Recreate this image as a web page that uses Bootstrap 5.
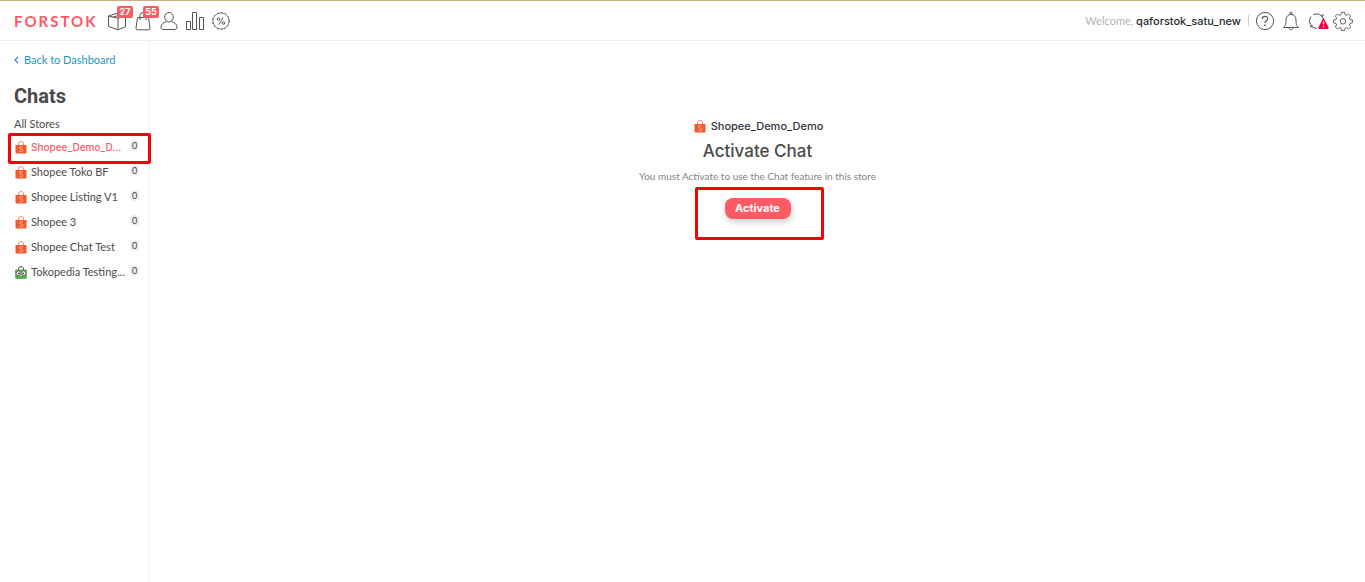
<!DOCTYPE html>
<html lang="en">
<head>
<meta charset="utf-8">
<meta name="viewport" content="width=device-width, initial-scale=1">
<title>Forstok – Chats</title>
<link href="https://cdn.jsdelivr.net/npm/bootstrap@5.3.0/dist/css/bootstrap.min.css" rel="stylesheet">
<style>
  body { font-family: Lato, "Liberation Sans", sans-serif; font-size: 11px; line-height: 16px; color: #4a4a4a; border-top: 1px solid #cfae87; }
  a { text-decoration: none; }
  .topbar { height: 40px; border-bottom: 1px solid #ededed; padding: 0 12px 0 14px; }
  .brand { font: 700 15px/20px Lato, sans-serif; letter-spacing: 2px; color: #fb5b63; width: 93px; padding-top: 1px; }
  .tools { gap: 6px; }
  .tool { color: #555; line-height: 0; width: 20px; }
  .tool svg, .store svg, .shop svg { display: block; flex: none; }
  .count { position: absolute; left: 10px; top: -5px; width: 16px; border-radius: 2px; background: #fc5b63; color: #fff; font-size: 9px; line-height: 12px; font-weight: 700; text-align: center; font-family: Inter, sans-serif; }
  .welcome { color: #b3b3b3; }
  .user { color: #262b33; font-weight: 500; font-family: Inter, sans-serif; }
  .divider { width: 1px; height: 11px; background: #ccc; margin: 0 6px 0 7px; }
  .side { width: 150px; min-height: calc(100vh - 41px); border-right: 1px solid #f3f3f3; padding: 11px 8px 0; }
  .back { color: #2196c8; padding-left: 6px; gap: 5px; }
  .side h1 { font: 700 20px/28px Roboto, sans-serif; margin: 14px 6px 6px; }
  .all-stores { color: #4a4a4a; padding: 0 6px; height: 19px; }
  .store { color: #4a4a4a; height: 25px; padding: 0 2px 1px 7px; gap: 4px; position: relative; }
  .store.active { color: #fc5b63; font: 500 10px/16px Inter, sans-serif; }
  .num { background: #efefef; border-radius: 4px; color: #444; font: 400 9px/11px Lato, sans-serif; width: 9px; text-align: center; margin: 0 0 3px auto; }
  .outline { position: absolute; border: 3px solid #f90008; border-radius: 2px; pointer-events: none; }
  .outline-store { inset: -2px -10px -4px 0; z-index: 1; }
  .outline-button { inset: -11px -33px -21px -30px; }
  .main { padding-top: 77px; }
  .shop { color: #30343b; font-weight: 500; font-family: Inter, sans-serif; gap: 5px; padding-left: 2px; }
  .main h2 { font: 500 17px/22px Inter, sans-serif; margin: 6px 0; }
  .main p { color: #858585; font-size: 10px; margin: 0 0 14px; }
  .btn-activate { background: #fc5b65; color: #fff; font: 700 11px/21px Inter, sans-serif; width: 66px; padding: 0; border: 0; border-radius: 8px; box-shadow: 1px 3px 6px #0003; }
  .btn-activate:hover { background: #e94b56; color: #fff; }
</style>
</head>
<body>
<svg width="0" height="0" class="position-absolute" aria-hidden="true">
  <symbol id="shopee" viewBox="0 0 12 13">
    <path d="M3.500 4V3a2.500 2.500 0 0 1 5 0v1" fill="none" stroke="#f58a66"/>
    <path d="M.5 4h11v7.500a1 1 0 0 1-1 1h-9a1 1 0 0 1-1-1z" fill="#f4582c"/>
    <path d="M7.700 6.200C6.700 5.300 4.500 5.500 4.500 6.800s3.300 1.200 3.300 2.700-2.300 1.700-3.500.6" fill="none" stroke="#ffd0bb" stroke-width=".8"/>
  </symbol>
  <symbol id="tokopedia" viewBox="0 0 12 13">
    <path d="M3.500 4V3a2.500 2.500 0 0 1 5 0v1" fill="none" stroke="#4a5a4b"/>
    <path d="M.5 4h11v7.500q0 1-1 1h-9q-1 0-1-1z" fill="#4cb050" stroke="#37803a" stroke-width=".5"/>
    <circle cx="3.600" cy="7.300" r="2.300" fill="#fff" stroke="#333" stroke-width=".5"/><circle cx="8.400" cy="7.300" r="2.300" fill="#fff" stroke="#333" stroke-width=".5"/>
    <circle cx="4" cy="7.500" r=".9" fill="#222"/><circle cx="8" cy="7.500" r=".9" fill="#222"/><path d="m5 9.300 1-.8 1 .8-1 1.200z" fill="#eef0d0"/>
  </symbol>
</svg>

<header class="topbar d-flex align-items-center justify-content-between">
  <nav class="d-flex align-items-center" aria-label="Main">
    <a href="#" class="brand">FORSTOK</a>
    <div class="tools d-flex align-items-center">
      <a href="#" class="tool position-relative" aria-label="Products">
        <svg width="20" height="20" viewBox="0 0 20 20" fill="none" stroke="currentColor" stroke-linejoin="round"><path d="M1.500 5 11 7.200v11.600L1.500 15.500zM11 7.200 18.500 4.800v11L11 18.800M1.500 5 9 2.500l9.500 2.300M6 6.200l7.500-2.500"/></svg>
        <span class="count">27</span></a>
      <a href="#" class="tool position-relative" aria-label="Orders">
        <svg width="20" height="20" viewBox="0 0 20 20" fill="none" stroke="currentColor" stroke-linejoin="round"><path d="M4.500 6.500h11l1.500 10.500q.2 1.800-1.500 1.800h-11q-1.700 0-1.500-1.800zM7 9V4.500a3 3 0 0 1 6 0V9"/></svg>
        <span class="count">55</span></a>
      <a href="#" class="tool" aria-label="Customers">
        <svg width="20" height="20" viewBox="0 0 20 20" fill="none" stroke="currentColor"><path d="M10 1.500c-6 0-5.500 9.500 0 9.500s6-9.500 0-9.500zM7.500 10.500c-3.500 1.500-5.500 2.700-5.500 5.500 0 2 1 2.500 3 2.500h10c2 0 3-.5 3-2.500 0-2.800-2-4-5.500-5.500"/></svg></a>
      <a href="#" class="tool" aria-label="Reports">
        <svg width="20" height="20" viewBox="0 0 20 20" fill="none" stroke="currentColor"><path d="M1.500 10.500h4v8h-4zM7.500 1.500h4v17h-4zM14.500 6.500h4v12h-4z"/></svg></a>
      <a href="#" class="tool" aria-label="Promotions">
        <svg width="20" height="20" viewBox="0 0 20 20" fill="none" stroke="currentColor"><circle cx="10" cy="10" r="8" stroke-width=".7"/><circle cx="10" cy="10" r="8.600" stroke-width=".8" stroke-dasharray="1.800 2.200"/><circle cx="7.500" cy="8" r="1.300"/><circle cx="12.500" cy="12" r="1.300"/><path d="m12 6.500-4 7"/></svg></a>
    </div>
  </nav>
  <div class="d-flex align-items-center">
    <span class="welcome">Welcome, <a href="#" class="user">qaforstok_satu_new</a></span>
    <span class="divider"></span>
    <div class="tools d-flex align-items-center">
      <a href="#" class="tool" aria-label="Help"><svg width="20" height="20" viewBox="0 0 20 20" fill="none" stroke="currentColor"><circle cx="10" cy="10" r="8.600"/><path d="M7.300 8c0-3.600 5.500-3.500 5.500-.3 0 2-2.800 2.200-2.800 4.300" stroke-width="1.200"/><circle cx="10" cy="14.300" r=".5" fill="currentColor"/></svg></a>
      <a href="#" class="tool" aria-label="Notifications"><svg width="20" height="20" viewBox="0 0 20 20" fill="none" stroke="currentColor"><path d="M2.500 16.500c2-2 2.500-3 2.500-7.500 0-7.500 10-7.500 10 0 0 4.500.5 5.500 2.500 7.500zM8 16.500c0 3 4 3 4 0M9 3.300V2a1 1 0 0 1 2 0v1.300"/></svg></a>
      <a href="#" class="tool" aria-label="Sync problems"><svg width="22" height="20" viewBox="0 0 22 20" fill="none" stroke="currentColor"><path d="M10 17.300A7.300 7.300 0 0 1 4 5.500M6 3.800A7.300 7.300 0 0 1 16.500 8M3 15.700h2v-2M14 5h2V3"/><path d="m16.500 8.500 4.300 8.500h-8.600z" fill="#f5003d" stroke="#f5003d" stroke-width="1.800" stroke-linejoin="round"/><path d="M16.500 10.500v3M16.500 14.800v1.400" stroke="#fff" stroke-width="1.400"/></svg></a>
      <a href="#" class="tool" aria-label="Settings"><svg width="20" height="20" viewBox="0 0 20 20" fill="none" stroke="currentColor" stroke-width=".9" stroke-linejoin="round"><path d="M8.500 1.300h3l.5 2.400 1.600.7 2-1.400 2.100 2.100-1.400 2 .7 1.400 2.400.4v3l-2.400.5-.7 1.500 1.400 2-2.100 2.100-2-1.400-1.600.7-.5 2.200h-3L8 17.300l-1.600-.7-2 1.400-2.100-2.100 1.400-2-.7-1.500-2.400-.5v-3L3 8.500l.7-1.400-1.400-2L4.400 3l2 1.400L8 3.700z"/><circle cx="10" cy="10.300" r="2.800"/></svg></a>
    </div>
  </div>
</header>

<div class="d-flex">
  <aside class="side flex-shrink-0">
    <a href="#" class="back d-flex align-items-center"><svg width="5" height="8" viewBox="0 0 5 8" fill="none" stroke="#2a86e8" stroke-width="1.200"><path d="M4 1 1 4l3 3"/></svg>Back to Dashboard</a>
    <h1>Chats</h1>
    <a href="#" class="all-stores d-block">All Stores</a>
    <nav aria-label="Stores">
      <a href="#" class="store active d-flex align-items-center"><svg width="12" height="13"><use href="#shopee"/></svg><span class="text-nowrap">Shopee_Demo_D...</span><span class="num">0</span><span class="outline outline-store"></span></a>
      <a href="#" class="store d-flex align-items-center"><svg width="12" height="13"><use href="#shopee"/></svg><span class="text-nowrap">Shopee Toko BF</span><span class="num">0</span></a>
      <a href="#" class="store d-flex align-items-center"><svg width="12" height="13"><use href="#shopee"/></svg><span class="text-nowrap">Shopee Listing V1</span><span class="num">0</span></a>
      <a href="#" class="store d-flex align-items-center"><svg width="12" height="13"><use href="#shopee"/></svg><span class="text-nowrap">Shopee 3</span><span class="num">0</span></a>
      <a href="#" class="store d-flex align-items-center"><svg width="12" height="13"><use href="#shopee"/></svg><span class="text-nowrap">Shopee Chat Test</span><span class="num">0</span></a>
      <a href="#" class="store d-flex align-items-center"><svg width="12" height="13"><use href="#tokopedia"/></svg><span class="text-nowrap">Tokopedia Testing...</span><span class="num">0</span></a>
    </nav>
  </aside>
  <main class="main flex-fill text-center">
    <div class="shop d-flex align-items-center justify-content-center"><svg width="12" height="13"><use href="#shopee"/></svg>Shopee_Demo_Demo</div>
    <h2>Activate Chat</h2>
    <p>You must Activate to use the Chat feature in this store</p>
    <div class="d-inline-flex position-relative">
      <button type="button" class="btn btn-activate">Activate</button>
      <span class="outline outline-button"></span>
    </div>
  </main>
</div>
<script src="https://cdn.jsdelivr.net/npm/bootstrap@5.3.0/dist/js/bootstrap.bundle.min.js"></script>
</body>
</html>
